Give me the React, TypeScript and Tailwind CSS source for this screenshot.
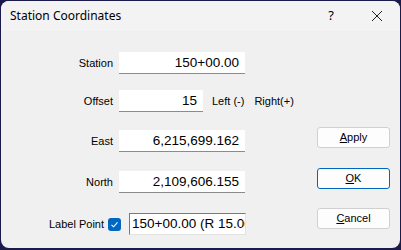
import React from 'react';

const Field: React.FC<{ label: string; value: string; width: string; mt: string; extra?: React.ReactNode }> = ({ label, value, width, mt, extra }) => (
  <div className={`flex items-center ${mt}`}>
    <span className="w-[113px] text-right pr-[1px] text-[11px] text-black">{label}</span>
    <div className={`ml-[5px] ${width} h-[22px] bg-white border-b border-[#8b8b8b] flex items-center justify-end pr-[6px] text-[13.5px] text-black leading-none`}>
      {value}
    </div>
    {extra}
  </div>
);

const DlgButton: React.FC<{ label: React.ReactNode; mt: string; primary?: boolean }> = ({ label, mt, primary }) => (
  <button
    className={`${mt} w-[73px] h-[21px] rounded-[3px] bg-[#fdfdfd] text-[11px] text-black flex items-center justify-center ${
      primary ? 'border border-[#0067c0]' : 'border border-[#d0d0d0]'
    }`}
  >
    {label}
  </button>
);

export default function App() {
  return (
    <div className="w-[401px] h-[250px] bg-[#1b1b4b] p-[1px] pb-[2px]" style={{ fontFamily: '"Liberation Sans", Arial, sans-serif' }}>
      <div className="w-full h-full rounded-[8px] overflow-hidden bg-[#f0f0f0] flex flex-col">
        <div className="h-[30px] bg-[#f3f3f3] flex items-center shrink-0">
          <span className="ml-[9px] text-[12px] text-black" style={{ fontFamily: '"Noto Sans", sans-serif' }}>Station Coordinates</span>
          <span className="ml-auto mr-[37px] text-[13px] text-black" style={{ fontFamily: '"Noto Sans", sans-serif' }}>?</span>
          <svg width="12" height="12" viewBox="0 0 12 12" className="mr-[17px]">
            <path d="M1 1 L11 11 M11 1 L1 11" stroke="#222" strokeWidth="1" />
          </svg>
        </div>
        <div className="flex flex-1">
          <div className="flex flex-col">
            <Field label="Station" value="150+00.00" width="w-[126px]" mt="mt-[21px]" />
            <Field
              label="Offset"
              value="15"
              width="w-[84px]"
              mt="mt-[16px]"
              extra={
                <div className="flex text-[11px] text-black ml-[9px]">
                  <span>Left (-)</span>
                  <span className="ml-[10px]">Right(+)</span>
                </div>
              }
            />
            <Field label="East" value="6,215,699.162" width="w-[126px]" mt="mt-[18px]" />
            <Field label="North" value="2,109,606.155" width="w-[126px]" mt="mt-[19px]" />
            <div className="flex items-center mt-[20px]">
              <span className="w-[103px] text-right text-[11px] text-black">Label Point</span>
              <span className="ml-[4px] w-[13px] h-[13px] rounded-[3px] bg-[#0067c0] flex items-center justify-center">
                <svg width="9" height="9" viewBox="0 0 9 9">
                  <path d="M1.5 4.8 L3.6 6.8 L7.5 2.4" fill="none" stroke="white" strokeWidth="1.1" />
                </svg>
              </span>
              <div className="ml-[8px] w-[117px] h-[22px] bg-white border border-[#7a7a7a] border-r-[#e3e3e3] border-b-[#e3e3e3] overflow-hidden whitespace-nowrap flex items-center pl-[2px] text-[13.5px] text-black leading-none">
                150+00.00 (R 15.00)
              </div>
            </div>
          </div>
          <div className="ml-auto mr-[10px] flex flex-col">
            <DlgButton label={<span><u>A</u>pply</span>} mt="mt-[96px]" />
            <DlgButton label={<span><u>O</u>K</span>} mt="mt-[20px]" primary />
            <DlgButton label={<span><u>C</u>ancel</span>} mt="mt-[19px]" />
          </div>
        </div>
      </div>
    </div>
  );
}
